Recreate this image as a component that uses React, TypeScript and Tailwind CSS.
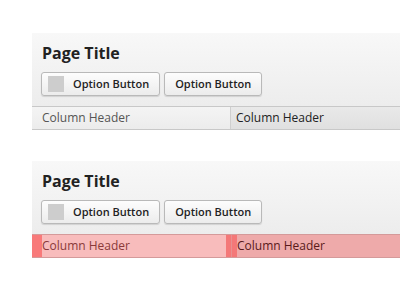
import React from 'react'

const font = { fontFamily: '"Open Sans", "DejaVu Sans", sans-serif' }

function OptionButton({ square }: { square?: boolean }) {
  return (
    <button className="flex h-[24px] items-center rounded-[3px] border border-[#b9b9b9] bg-gradient-to-b from-[#fdfdfd] to-[#ececec] px-[10px] text-[11px] font-semibold text-[#222] shadow-[0_1px_1px_rgba(0,0,0,0.12)]">
      {square && <span className="mr-[9px] -ml-[4px] h-[16px] w-[16px] bg-[#cdcdcd]" />}
      Option Button
    </button>
  )
}

function Panel({ selected }: { selected?: boolean }) {
  return (
    <div className="ml-[32px] flex flex-col bg-gradient-to-b from-[#f8f8f8] to-[#e9e9e9]">
      {/* Title + toolbar */}
      <div className="px-[10px] pt-[10px] pb-[10px]">
        <h1 className="text-[16px] leading-[20px] font-bold text-[#222]">Page Title</h1>
        <div className="mt-[9px] flex gap-[4px] -ml-[1px]">
          <OptionButton square />
          <OptionButton />
        </div>
      </div>

      {/* Column headers */}
      {selected ? (
        <div className="flex h-[24px] border-t border-b border-[#d49a9a] text-[12px] leading-[22px]">
          <div className="w-[10px] bg-[#f87a7a]" />
          <div className="w-[184px] bg-[#f8bcbc] text-[#8a3a3a]">Column Header</div>
          <div className="w-[5px] bg-[#f47878]" />
          <div className="w-px bg-[#e89090]" />
          <div className="w-[5px] bg-[#f47878]" />
          <div className="flex-1 bg-[#eeaaaa] text-[#5a1a1a]">Column Header</div>
        </div>
      ) : (
        <div className="flex h-[24px] border-t border-b border-[#c8c8c8] text-[12px] leading-[22px]">
          <div className="w-[199px] border-r border-[#cfcfcf] bg-gradient-to-b from-[#f4f4f4] to-[#ececec] pl-[10px] text-[#555]">
            Column Header
          </div>
          <div className="flex-1 bg-gradient-to-b from-[#e9e9e9] to-[#e0e0e0] pl-[5px] text-[#222]">Column Header</div>
        </div>
      )}
    </div>
  )
}

export default function App() {
  return (
    <div className="h-[300px] w-[400px] overflow-hidden bg-white" style={font}>
      <div className="pt-[33px]">
        <Panel />
      </div>
      <div className="pt-[31px]">
        <Panel selected />
      </div>
    </div>
  )
}
